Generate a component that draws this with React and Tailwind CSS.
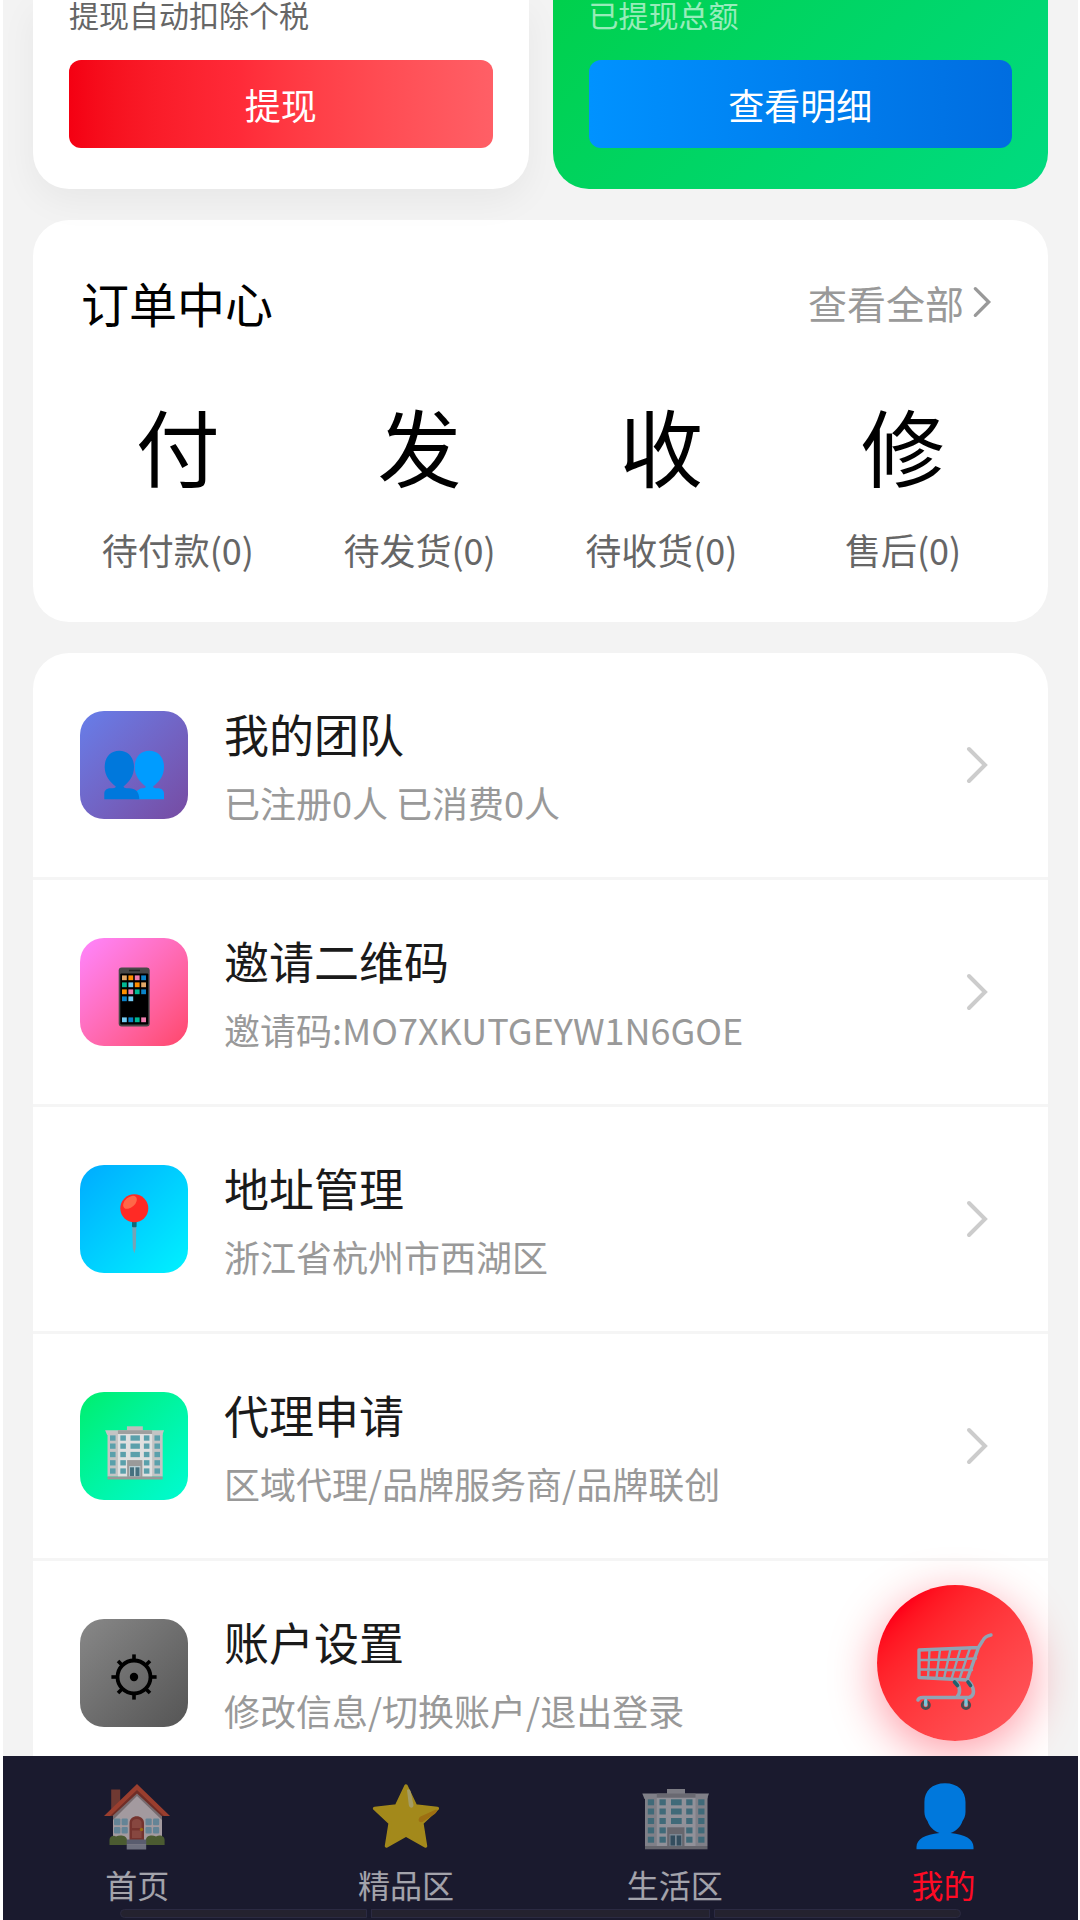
const orders = [
  { id: 1, glyph: "付", label: "待付款(0)" },
  { id: 2, glyph: "发", label: "待发货(0)" },
  { id: 3, glyph: "收", label: "待收货(0)" },
  { id: 4, glyph: "修", label: "售后(0)" },
];

const menu = [
  {
    id: "team",
    title: "我的团队",
    desc: "已注册0人 已消费0人",
    tile: "from-[#667eea] to-[#764ba2]",
    Icon: TeamIcon,
  },
  {
    id: "invite",
    title: "邀请二维码",
    desc: "邀请码:MO7XKUTGEYW1N6GOE",
    tile: "from-[#ff85ff] to-[#ff4569]",
    Icon: PhoneIcon,
  },
  {
    id: "address",
    title: "地址管理",
    desc: "浙江省杭州市西湖区",
    tile: "from-[#00abff] to-[#00f2ff]",
    Icon: PinIcon,
  },
  {
    id: "agent",
    title: "代理申请",
    desc: "区域代理/品牌服务商/品牌联创",
    tile: "from-[#00ee6c] to-[#00fbd2]",
    Icon: BuildingIcon,
  },
  {
    id: "settings",
    title: "账户设置",
    desc: "修改信息/切换账户/退出登录",
    tile: "from-[#888888] to-[#555555]",
    Icon: GearIcon,
  },
];

const tabs = [
  { id: "home", label: "首页", Icon: HouseIcon },
  { id: "featured", label: "精品区", Icon: StarIcon },
  { id: "life", label: "生活区", Icon: BuildingIcon },
  { id: "mine", label: "我的", Icon: UserIcon, active: true },
];

function TeamIcon({ className }) {
  return (
    <svg viewBox="0 0 60 60" className={className} aria-hidden="true">
      <path
        fill="#009cff"
        d="M45.300 10.700C54 10.700 60 17 60 27C60 36 55 42 49 46.500C49.500 48 51 48.300 53 48.300C57.500 48.300 60 50 60 54V59.300H31V52L37 48.300C40 48.300 41.500 48 41.800 46.500C36 42 30.700 36 30.700 27C30.700 17 36.500 10.700 45.300 10.700Z"
      />
      <path
        fill="#0078dc"
        d="M15.300 10.700C24 10.700 30 17 30 27C30 36 25 42 19.500 46.500C20 48 21.500 48.300 25 48.300C31.500 48.300 35.300 52 35.300 59.300H.3V54C.3 50 3 48.300 7 48.300C9.500 48.300 11.500 48 11.800 46.500C6 42 .7 36 .7 27C.7 17 6.500 10.700 15.300 10.700Z"
      />
    </svg>
  );
}

const apps = [
  ["#e0a868", "#ff8f00", "#f07cae", "#0a82c8"],
  ["#00b894", "#74ccf4", "#ff8f00", "#e0a868"],
  ["#ff8f00", "#f07cae", "#00b894", "#0a82c8"],
  ["#0a82c8", "#74ccf4"],
];
const dock = ["#74ccf4", "#0a82c8", "#00b894", "#f07cae"];

function PhoneIcon({ className }) {
  return (
    <svg viewBox="0 0 60 60" className={className} aria-hidden="true">
      <rect x="14.700" y="0.500" width="31" height="59" rx="3" fill="#484848" />
      <rect x="16.300" y="6.500" width="28" height="51" rx="1" fill="#000" />
      <path d="M25 3.500H36" stroke="#222" strokeWidth="1.500" />
      {apps.map((row, r) =>
        row.map((color, c) => (
          <rect
            key={`${r}-${c}`}
            x={18 + c * 6.4}
            y={8.4 + r * 7}
            width="4.800"
            height="4.800"
            fill={color}
          />
        ))
      )}
      {dock.map((color, c) => (
        <rect
          key={color}
          x={18 + c * 6.4}
          y="50.400"
          width="4.800"
          height="4.800"
          fill={color}
        />
      ))}
    </svg>
  );
}

function PinIcon({ className }) {
  return (
    <svg viewBox="0 0 60 60" className={className} aria-hidden="true">
      <path d="M28.300 32H32.300L31.800 54L30.300 59.500L28.800 54Z" fill="#78a3b4" />
      <rect x="28" y="27" width="4.600" height="6.300" rx="1" fill="#0f6a78" />
      <circle cx="30.300" cy="14.300" r="14" fill="#ff2a25" />
      <ellipse
        cx="26"
        cy="8.300"
        rx="8"
        ry="5"
        transform="rotate(-42 26 8.300)"
        fill="#ff6748"
      />
    </svg>
  );
}

const windowRows = [16.3, 25.5, 35, 44.4, 53.7];

function BuildingIcon({ className }) {
  return (
    <svg viewBox="0 0 68 68" className={className} aria-hidden="true">
      <rect x="26" y="6" width="18" height="6" fill="#bdbdbd" />
      <path d="M1.300 10.500H68L66 16H3.500Z" fill="#c4c4c4" />
      <rect x="4" y="14" width="62.500" height="49" fill="#c4c4c4" />
      <rect x="15.800" y="14.500" width="38.700" height="48.500" fill="#e0e0e0" />
      <rect x="15.800" y="10.500" width="38.700" height="4.200" fill="#9e9e9e" />
      {windowRows.map((y, i) => (
        <g key={y} fill="#5aa0ab">
          <rect x="6.800" y={y} width="6.300" height="6" />
          <rect x="18.500" y={y} width="6.300" height="6" />
          {i < 3 && <rect x="30" y={y} width="10.700" height="6" />}
          <rect x="45.200" y={y} width="6.300" height="6" />
          <rect x="57.200" y={y} width="6.300" height="6" />
        </g>
      ))}
      <rect x="26.200" y="44.300" width="17.300" height="19" fill="#9a9a9a" />
      <rect x="28.500" y="51" width="12.700" height="12" fill="#b8cdd3" />
      <rect x="29.500" y="52.500" width="4.500" height="10" fill="#45707f" />
      <rect x="35.700" y="52.500" width="4.500" height="10" fill="#45707f" />
      <rect x="4" y="63" width="62.500" height="3.300" fill="#989898" />
    </svg>
  );
}

const teeth = [0, 45, 90, 135, 180, 225, 270, 315];

function GearIcon({ className }) {
  return (
    <svg viewBox="0 0 60 60" className={className} aria-hidden="true">
      <circle cx="30" cy="29" r="16.500" fill="none" stroke="#000" strokeWidth="3.800" />
      <circle cx="30" cy="29" r="4.200" />
      {teeth.map((deg) => (
        <rect
          key={deg}
          x="28.200"
          y="6.400"
          width="3.600"
          height="6"
          transform={`rotate(${deg} 30 29)`}
        />
      ))}
    </svg>
  );
}

function HouseIcon({ className }) {
  return (
    <svg viewBox="0 0 68 68" className={className} aria-hidden="true">
      <path d="M8.200 6.500H17.200V22L8.200 30Z" fill="#a84e35" />
      <path d="M34 8L59 33V62H10V33Z" fill="#fff0ea" />
      <path d="M34 8L59 31V37L34 13L10 37V31Z" fill="#b5a29b" />
      <path d="M34 1L67 33H59.500L34 9L8.500 33H1Z" fill="#f0562f" />
      <path d="M34 7L61 33H58.500L34 10.500L9.500 33H7Z" fill="#a83b22" />
      <path d="M26.500 57V40C26.500 31 41 31 41 40V57Z" fill="#b2452f" />
      <path d="M29 45V39C30 35 37.500 35 38.500 39V45ZM29 47.500H38.500V55H29Z" fill="#d0664c" />
      <circle cx="38.500" cy="46.500" r="1.700" fill="#f0a000" />
      <g fill="#96cbdc">
        <rect x="11" y="35.500" width="6.400" height="6.700" rx="1" />
        <rect x="18.600" y="35.500" width="6.200" height="6.700" rx="1" />
        <rect x="11" y="44" width="6.400" height="6.500" rx="1" />
        <rect x="18.600" y="44" width="6.200" height="6.500" rx="1" />
        <rect x="42.500" y="35.500" width="6.200" height="6.700" rx="1" />
        <rect x="50" y="35.500" width="6.200" height="6.700" rx="1" />
        <rect x="42.500" y="44" width="6.200" height="6.500" rx="1" />
        <rect x="50" y="44" width="6.200" height="6.500" rx="1" />
      </g>
      <path
        d="M6.500 62V57C6.500 53 11 52 13 53.500C17 51.500 24 52.500 24 57V62ZM43 62V57C43 52.500 49 51.500 53 53.500C57 51.500 61.600 53 61.600 57V62Z"
        fill="#6c8734"
      />
      <rect x="23.700" y="56.500" width="19.500" height="5" fill="#84899a" />
      <rect x="23.700" y="61.500" width="19.500" height="5" fill="#a6a9b5" />
    </svg>
  );
}

function StarIcon({ className }) {
  return (
    <svg viewBox="0 0 68 68" className={className} aria-hidden="true">
      <path
        d="M34 3L43.500 23L65.300 25.500L49.800 40L53.500 63L34 52L14.500 63L18.200 40L2.700 25.500L24.500 23Z"
        fill="#ffd40f"
        stroke="#ffd40f"
        strokeWidth="3.500"
        strokeLinejoin="round"
      />
      <path d="M35 7C37 5 38.500 7 39 10L41.500 22C41.500 25.500 37.500 25.500 36.800 22Z" fill="#fff288" />
      <path d="M64 26.500C66.500 27 64 30 62 31.500L50.500 39C46 40.500 45.500 35.500 48.500 33.500Z" fill="#f5a800" />
    </svg>
  );
}

function UserIcon({ className }) {
  return (
    <svg viewBox="1 0 68 68" className={className} aria-hidden="true">
      <path
        d="M36 .3C49 .3 56.500 8 56.500 19V29C56.500 33 55 36 53.500 38C51.500 44 47 48 41.500 50C56 51.500 64.500 56 64.500 64V66.300H7.500V64C7.500 56 16 51.500 30.500 50C25 48 20.500 44 18.500 38C17 36 15.400 33 15.400 29V19C15.400 8 23 .3 36 .3Z"
        fill="#0078dc"
      />
    </svg>
  );
}

function CartIcon({ className }) {
  return (
    <svg
      viewBox="0 0 80 80"
      className={className}
      fill="none"
      stroke="#90a4b4"
      strokeLinecap="round"
      strokeLinejoin="round"
      aria-hidden="true"
    >
      <path
        d="M4 28L61 26.500M4 37.500L57 38M14.500 18L13 46M25 17.500L21.500 46M35.500 17L29 46.500M45.500 16.500L36.500 47M55 16L44.500 47"
        strokeWidth="2.400"
      />
      <path
        d="M76 3C71 4 69.500 5.500 67.500 9L63.500 15.500L4 18V45.500L52 48L63.500 15.500"
        strokeWidth="3.400"
      />
      <path
        d="M41 50C45 54 46 61 42 65M53.500 49C60 56 60 64 54 65.500H8C5 65.500 3.500 66 3 68"
        strokeWidth="3.600"
      />
      <path d="M39.500 50L42.500 53.500M53 50L55.500 53.500" stroke="#22616f" strokeWidth="3.600" />
      <circle cx="10.700" cy="73" r="3.700" stroke="#4c4c50" strokeWidth="2.800" />
      <circle cx="51" cy="73" r="3.700" stroke="#4c4c50" strokeWidth="2.800" />
      <path d="M10.700 68.500V73M51 68.500V73" stroke="#7cc4d8" strokeWidth="3.400" />
    </svg>
  );
}

function Chevron({ className }) {
  return (
    <svg
      viewBox="0 0 24 40"
      fill="none"
      stroke="currentColor"
      strokeWidth="4"
      strokeLinecap="round"
      className={className}
      aria-hidden="true"
    >
      <path d="M4 4L20 20L4 36" />
    </svg>
  );
}

export default function App() {
  return (
    <div className="flex h-screen flex-col overflow-hidden bg-white pr-0.5 pl-[3px] font-['Noto_Sans_CJK_SC',sans-serif]">
      <main className="min-h-0 flex-1 overflow-hidden bg-[#f3f3f3] px-[30px]">
        <section className="grid grid-cols-2 gap-6">
          <div className="rounded-b-[36px] bg-white px-9 pb-[41px] shadow-[0_12px_36px_rgba(0,0,0,0.05)]">
            <p className="text-[30px] leading-7 text-[#666666]">提现自动扣除个税</p>
            <button className="mt-8 h-[88px] w-full rounded-xl bg-linear-to-r from-[#f40012] via-[#ff2a38] via-40% to-[#ff5f66] text-4xl text-white">
              提现
            </button>
          </div>
          <div className="rounded-b-[36px] bg-linear-135 from-[#00d04c] to-[#00db80] px-9 pb-[41px]">
            <p className="text-[30px] leading-7 text-white/60">已提现总额</p>
            <button className="mt-8 h-[88px] w-full rounded-xl bg-linear-to-r from-[#0092ff] to-[#006de0] text-4xl text-white">
              查看明细
            </button>
          </div>
        </section>

        <section className="mt-[31px] rounded-[36px] bg-white px-6 pt-[46px] pb-[46px]">
          <div className="flex items-center justify-between px-6">
            <h2 className="text-5xl leading-[72px] text-black">订单中心</h2>
            <a href="#orders" className="flex items-center gap-2 pr-2 text-[39px] leading-[70px] text-[#999999]">
              查看全部
              <Chevron className="h-9 w-5" />
            </a>
          </div>
          <div className="mt-[50px] grid grid-cols-4">
            {orders.map((order) => (
              <button key={order.id} className="flex flex-col items-center gap-5">
                <span className="text-[84px] leading-[114px] text-black">{order.glyph}</span>
                <span className="text-4xl leading-[54px] text-[#666666]">{order.label}</span>
              </button>
            ))}
          </div>
        </section>

        <section className="mt-[31px] overflow-hidden rounded-t-[36px] bg-white">
          {menu.map(({ id, title, desc, tile, Icon }) => (
            <a
              key={id}
              href={`#${id}`}
              className="flex items-center gap-9 border-b-[3px] border-[#f5f5f5] px-[47px] py-12"
            >
              <span
                className={`flex size-[108px] shrink-0 items-center justify-center rounded-3xl bg-linear-135 pt-2.5 ${tile}`}
              >
                <Icon className="size-[60px]" />
              </span>
              <span className="flex flex-1 flex-col gap-2">
                <span className="text-[45px] leading-[66px] text-[#1a1a1a]">{title}</span>
                <span className="text-4xl leading-[54px] text-[#999999]">{desc}</span>
              </span>
              <Chevron className="mr-3 h-10 w-6 text-[#cccccc]" />
            </a>
          ))}
        </section>
      </main>

      <button
        aria-label="购物车"
        className="fixed right-[47px] bottom-[179px] flex size-[156px] items-center justify-center rounded-full bg-linear-135 from-[#ff0018] from-15% to-[#ff5a60] pt-[18px] shadow-[0_12px_48px_rgba(255,0,30,0.4)]"
      >
        <CartIcon className="size-20" />
      </button>

      <nav className="relative bg-[#1a1a2e] pt-[27px]">
        <div className="grid grid-cols-4 pb-0.5">
          {tabs.map(({ id, label, Icon, active }) => (
            <a
              key={id}
              href={`#${id}`}
              className={`flex flex-col items-center gap-2.5 text-[32px] leading-[46px] ${
                active ? "text-[#ff0a24]" : "text-white opacity-60"
              }`}
            >
              <Icon className="size-[68px]" />
              {label}
            </a>
          ))}
        </div>
        <div className="mx-[117px] grid h-[11px] grid-cols-[8fr_11fr_8fr] gap-1 pb-0.5">
          <span className="rounded-l-full border border-[#2b2a42] bg-[#24222f]" />
          <span className="border border-[#2b2a42] bg-[#24222f]" />
          <span className="rounded-r-full border border-[#2b2a42] bg-[#24222f]" />
        </div>
      </nav>
    </div>
  );
}
